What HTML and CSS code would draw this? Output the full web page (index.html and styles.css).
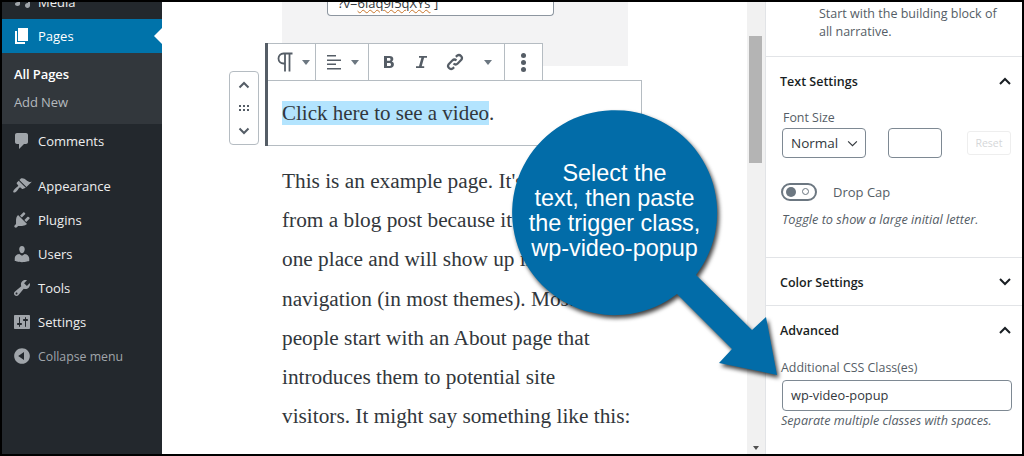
FILE: index.html
```html
<!DOCTYPE html>
<html lang="en">
<head>
<meta charset="utf-8">
<title>Edit Page</title>
<link rel="stylesheet" href="styles.css">
</head>
<body>
<div class="frame">
  <nav class="adminmenu">
    <ul class="menu">
      <li class="item media"><svg class="ico" viewBox="0 0 20 20"><path d="M2 3h9v4H8v5c0 1-1 2-2.500 2S3 13 3 12s1-2 3-2V5H2zM18 3v10.500c0 1.400-1.100 2.500-2.500 2.500S13 14.900 13 13.500s1.100-2.500 2.500-2.500h.5V6h-3V3z"/></svg><span>Media</span></li>
      <li class="item current"><svg class="ico" viewBox="0 0 20 20"><path d="M6 15V2h10v13H6zm-1 1h8v2H3V5h2v11z"/></svg><span>Pages</span></li>
      <li class="sub">
        <a class="sub-on">All Pages</a>
        <a>Add New</a>
      </li>
      <li class="item"><svg class="ico" viewBox="0 0 20 20"><path d="M5 2h9c1.100 0 2 .9 2 2v7c0 1.100-.9 2-2 2h-2l-5 5v-5H5c-1.100 0-2-.9-2-2V4c0-1.100.9-2 2-2z"/></svg><span>Comments</span></li>
      <li class="item gap"><svg class="ico" viewBox="0 0 20 20"><path d="M14.480 11.060L7.410 3.990l1.500-1.500c.5-.56 2.300-.47 3.510.32 1.210.8 1.430 1.280 2.910 2.100 1.180.64 2.450 1.260 4.450.85zm-.71.71L6.700 4.700 4.930 6.470c-.39.39-.39 1.020 0 1.410l1.060 1.060c.39.39.39 1.030 0 1.420-.6.6-1.430 1.110-2.210 1.690-.35.26-.7.53-1.010.84-1.340 1.340-2 2.740-1.330 3.400.65.66 2.050.01 3.390-1.330.31-.31.58-.66.84-1.010.58-.78 1.090-1.610 1.690-2.210.39-.39 1.030-.39 1.420 0l1.060 1.060c.39.39 1.020.39 1.410 0z"/></svg><span>Appearance</span></li>
      <li class="item"><svg class="ico" viewBox="0 0 20 20"><path d="M13.110 4.360L9.870 7.600 8 5.730l3.240-3.240c.35-.34 1.050-.2 1.560.32.52.51.66 1.210.31 1.550zm-8 1.770l.91-1.120 9.010 9.010-1.190.84c-.71.71-2.630 1.160-3.820 1.160H6.140L4.900 17.260c-.59.59-1.540.59-2.120 0-.59-.58-.59-1.530 0-2.120l1.240-1.240v-3.880c0-1.130.4-3.190 1.090-3.890zm7.260 3.970l3.240-3.240c.34-.35 1.040-.21 1.550.31.52.51.66 1.210.31 1.550l-3.240 3.250z"/></svg><span>Plugins</span></li>
      <li class="item"><svg class="ico" viewBox="0 0 20 20"><path d="M10 9.250c-2.270 0-2.730-3.440-2.730-3.440C7 4.020 7.820 2 9.970 2c2.160 0 2.980 2.020 2.710 3.810 0 0-.41 3.440-2.680 3.440zm0 2.570L12.720 10c2.390 0 4.520 2.330 4.520 4.530v2.490s-3.650 1.130-7.240 1.130c-3.650 0-7.240-1.130-7.240-1.130v-2.490c0-2.250 1.940-4.480 4.470-4.480z"/></svg><span>Users</span></li>
      <li class="item"><svg class="ico" viewBox="0 0 20 20"><path d="M16.680 9.770c-1.340 1.340-3.300 1.670-4.950.99l-5.410 6.520c-.99.99-2.590.99-3.580 0s-.99-2.590 0-3.570l6.520-5.420c-.68-1.650-.35-3.610.99-4.950 1.280-1.280 3.120-1.620 4.720-1.060l-2.890 2.890 2.820 2.820 2.860-2.870c.53 1.580.18 3.390-1.080 4.650zM3.810 16.210c.4.39 1.040.39 1.430 0 .4-.4.4-1.040 0-1.430-.39-.4-1.030-.4-1.430 0-.39.39-.39 1.030 0 1.430z"/></svg><span>Tools</span></li>
      <li class="item"><svg class="ico" viewBox="0 0 20 20"><path d="M18 16V4c0-.55-.45-1-1-1H3c-.55 0-1 .45-1 1v12c0 .55.45 1 1 1h14c.55 0 1-.45 1-1zM8 11h1c.55 0 1 .45 1 1s-.45 1-1 1H8v1.500c0 .28-.22.5-.5.5s-.5-.22-.5-.5V13H6c-.55 0-1-.45-1-1s.45-1 1-1h1V5.500c0-.28.22-.5.5-.5s.5.22.5.5V11zm5-2h-1c-.55 0-1-.45-1-1s.45-1 1-1h1V5.500c0-.28.22-.5.5-.5s.5.22.5.5V7h1c.55 0 1 .45 1 1s-.45 1-1 1h-1v5.500c0 .28-.22.5-.5.5s-.5-.22-.5-.5V9z"/></svg><span>Settings</span></li>
      <li class="item collapse"><svg class="ico" viewBox="0 0 20 20"><path d="M10 2.160c4.330 0 7.840 3.510 7.840 7.840s-3.510 7.840-7.840 7.840S2.160 14.330 2.160 10 5.710 2.160 10 2.160zm2 11.720V6.120L6.180 9.970z"/></svg><span>Collapse menu</span></li>
    </ul>
  </nav>

  <main class="editor">
    <div class="embed">
      <div class="embed-input">?v=<span class="squiggle">6laq9l5qXYs</span> ]</div>
    </div>

    <div class="block">
      <div class="toolbar">
        <div class="tgroup t-para">
          <svg class="tb-ico para" viewBox="0 0 16 20"><path fill="none" stroke="currentColor" stroke-width="1.800" d="M15.500 1.500H6.500a5 5 0 0 0 0 10H8M8 1.500V19.500M12.500 1.500V19.500"/></svg>
          <i class="caret"></i>
        </div>
        <div class="tgroup t-align">
          <svg class="tb-ico small" viewBox="0 0 14 16"><path d="M0 1h9v1.500H0zM0 5.500h14V7H0zM0 9.500h9V11H0zM0 14h14v1.500H0z"/></svg>
          <i class="caret"></i>
        </div>
        <div class="tgroup t-format">
          <svg class="tb-ico small" viewBox="0 0 16 16"><path d="M3 2h5.500c2.500 0 3.800 1.200 3.800 3.100 0 1.200-.6 2-1.500 2.500 1.300.4 2.100 1.400 2.100 2.900 0 2.300-1.600 3.500-4.100 3.500H3zm3 4.800h2c1 0 1.500-.5 1.500-1.400S9 4.100 8 4.100H6zm0 5.100h2.300c1.100 0 1.700-.5 1.700-1.500s-.6-1.500-1.700-1.500H6z"/></svg>
          <svg class="tb-ico small" viewBox="0 0 16 16"><path d="M6 2h8v1.800h-2.900L8.700 12.200h2.500V14H3v-1.800h3L8.400 3.800H6z"/></svg>
          <svg class="tb-ico link" viewBox="0 0 20 20"><path fill="none" stroke="currentColor" stroke-width="2.200" d="M8.500 11.500a3 3 0 0 0 4.200 0l3.600-3.600a3 3 0 0 0-4.200-4.200l-1.200 1.200M11.500 8.500a3 3 0 0 0-4.200 0l-3.600 3.600a3 3 0 0 0 4.200 4.200l1.200-1.200"/></svg>
          <i class="caret"></i>
        </div>
        <div class="tgroup t-more">
          <i class="dots"></i>
        </div>
      </div>
      <div class="para-box">
        <span class="selected">Click here to see a video</span>.
      </div>
      <div class="mover">
        <svg class="mv" viewBox="0 0 12 8"><path fill="none" stroke="currentColor" stroke-width="2" d="M1.500 6.500L6 2l4.500 4.500"/></svg>
        <span class="grip"></span>
        <svg class="mv" viewBox="0 0 12 8"><path fill="none" stroke="currentColor" stroke-width="2" d="M1.500 1.500L6 6l4.500-4.500"/></svg>
      </div>
    </div>

    <p class="body-copy">This is an example page. It's different from a blog post because it will stay in one place and will show up in your site navigation (in most themes). Most people start with an About page that introduces them to potential site<br>visitors. It might say something like this:</p>
  </main>

  <div class="scrollbar"><div class="thumb"></div><i class="scroll-down"></i></div>

  <aside class="inspector">
    <div class="blockcard">Start with the building block of all narrative.</div>

    <section class="panel text-panel">
      <header class="panel-head"><h2>Text Settings</h2><svg class="chev" viewBox="0 0 12 8"><path fill="none" stroke="currentColor" stroke-width="2" d="M1 7l5-5 5 5"/></svg></header>
      <div class="label fs-label">Font Size</div>
      <div class="fs-row">
        <div class="select">Normal<svg class="sel-chev" viewBox="0 0 12 8"><path fill="none" stroke="currentColor" stroke-width="1.300" d="M1 1.500l5 5 5-5"/></svg></div>
        <div class="num"></div>
        <div class="reset">Reset</div>
      </div>
      <div class="toggle-row">
        <span class="toggle"><i class="knob"></i><i class="ring"></i></span>
        <span class="toggle-label">Drop Cap</span>
      </div>
      <div class="help">Toggle to show a large initial letter.</div>
    </section>

    <section class="panel closed">
      <header class="panel-head"><h2>Color Settings</h2><svg class="chev" viewBox="0 0 12 8"><path fill="none" stroke="currentColor" stroke-width="2" d="M1 1l5 5 5-5"/></svg></header>
    </section>

    <section class="panel adv-panel">
      <header class="panel-head"><h2>Advanced</h2><svg class="chev" viewBox="0 0 12 8"><path fill="none" stroke="currentColor" stroke-width="2" d="M1 7l5-5 5 5"/></svg></header>
      <div class="label css-label">Additional CSS Class(es)</div>
      <div class="css-input">wp-video-popup</div>
      <div class="help css-help">Separate multiple classes with spaces.</div>
    </section>
  </aside>

  <svg class="callout-shape" viewBox="0 0 1024 456" aria-hidden="true">
    <path d="M696 275L752 330L766 317L777 375L719 363L732 349L677 294A102.500 102.500 0 1 1 696 275Z"/>
  </svg>
  <div class="callout-text">Select the<br>text, then paste<br>the trigger class,<br>wp-video-popup</div>
</div>
</body>
</html>
```
FILE: styles.css
```css
* { box-sizing: border-box; }
html, body { margin: 0; padding: 0; }
body { width: 1024px; height: 456px; overflow: hidden; background: #000; font-family: "Open Sans", "Liberation Sans", sans-serif; }
.frame { position: relative; display: flex; width: 1024px; height: 456px; border: 2px solid #000; overflow: hidden; background: #fff; }

/* Admin menu */
.adminmenu { flex: 0 0 160px; background: #23282d; overflow: hidden; color: #eee; font-size: 13px; }
.menu { list-style: none; margin: -17px 0 0; padding: 0; }
.item { display: flex; align-items: center; height: 34px; padding-left: 10px; gap: 6px; position: relative; }
.ico { width: 20px; height: 20px; fill: #a0a5aa; flex: none; }
.current { background: #0073aa; color: #fff; }
.current .ico { fill: #fff; }
.current::after { content: ""; position: absolute; right: 0; top: 9px; border: 8px solid transparent; border-right-color: #fff; border-left-width: 0; }
.sub { background: #32373c; height: 71px; padding-top: 7px; font-size: 13px; display: flex; flex-direction: column; }
.sub a { display: block; height: 28px; line-height: 28px; padding-left: 12px; color: #b4b9be; letter-spacing: -.1px; }
.sub .sub-on { color: #fff; font-weight: 600; }
.gap { margin-top: 11px; }
.collapse { color: #a0a5aa; font-size: 12.300px; }

/* Editor column */
.editor { flex: 0 0 585px; padding-left: 120px; background: #fff; overflow: hidden; }
.embed { width: 346px; height: 64px; background: #f3f3f4; padding-left: 45px; }
.embed-input { width: 227px; height: 14px; margin-top: 0; background: #fff; border: 1px solid #8d96a0; border-top: 0; border-radius: 0 0 4px 4px; font-size: 13px; line-height: 2px; padding-left: 10px; color: #32373c; overflow: hidden; }
.squiggle { text-decoration: underline wavy #c8752b 1px; }
.block { position: relative; margin: -23px 0 0 -17px; width: 377px; border-left: 3px solid #555d66; }
.toolbar { display: flex; position: relative; width: 275px; height: 38px; background: #fff; border: 1px solid #b5bcc2; border-left: 0; color: #555d66; }
.tgroup { display: flex; align-items: center; border-right: 1px solid #b5bcc2; height: 100%; }
.tgroup:last-child { border-right: 0; }
.t-para { width: 48px; padding-left: 9px; gap: 9px; }
.t-align { width: 53px; padding-left: 11px; gap: 10px; }
.t-format { width: 136px; padding-left: 12px; }
.t-more { flex: 1; justify-content: center; }
.tb-ico { fill: currentColor; flex: none; }
.tb-ico.para { width: 16px; height: 20px; }
.tb-ico.small { width: 16px; height: 16px; }
.t-align .tb-ico.small { width: 14px; }
.t-format .tb-ico.small { margin-right: 16px; }
.t-format .tb-ico.link { width: 20px; height: 20px; margin-right: 19px; }
.caret { width: 0; height: 0; border: 4px solid transparent; border-top: 5px solid #6c7781; border-bottom: 0; flex: none; }
.dots { width: 5px; height: 5px; border-radius: 50%; background: #555d66; box-shadow: 0 -7px 0 #555d66, 0 7px 0 #555d66; }
.para-box { height: 66px; width: 374px; margin-top: -1px; border: 1px solid #b5bcc2; border-left: 0; padding: 18px 0 0 14px; font-family: "Liberation Serif", serif; font-size: 21px; line-height: 28px; color: #32373c; background: #fff; }
.selected { background: #b3e4fe; }
.mover { position: absolute; left: -39px; top: 28px; width: 30px; height: 74px; display: flex; flex-direction: column; align-items: center; justify-content: space-between; padding: 9px 0; background: #fff; border: 1px solid #b5bcc2; border-radius: 4px; color: #555d66; }
.mv { width: 12px; height: 8px; }
.grip { width: 12px; height: 6px; background-image: radial-gradient(#555d66 1px, transparent 1px); background-size: 4px 4px; background-position: 0 -1px; }
.body-copy { width: 352px; margin: 16px 0 0; font-family: "Liberation Serif", serif; font-size: 21.300px; line-height: 39.200px; color: #32373c; }

/* Scrollbar */
.scrollbar { position: relative; flex: 0 0 18px; background: #f1f1f1; }
.thumb { width: 13px; height: 127px; margin: 34px 0 0 2px; background: #b4b4b4; }
.scroll-down { position: absolute; left: 6px; bottom: 4px; width: 0; height: 0; border: 3px solid transparent; border-top: 4px solid #505050; border-bottom: 0; }

/* Inspector */
.inspector { flex: 1; border-left: 1px solid #e2e4e7; color: #191e23; font-size: 13px; background: #fff; min-width: 0; }
.blockcard { height: 55px; padding: 3px 10px 0 53px; line-height: 18px; color: #555d66; font-size: 12.500px; border-bottom: 1px solid #e2e4e7; }
.panel { border-bottom: 1px solid #e2e4e7; padding: 0 10px 0 14px; }
.panel-head { display: flex; justify-content: space-between; align-items: center; height: 50px; padding-bottom: 2px; }
.panel-head h2 { margin: 0; font-size: 12.500px; font-weight: 600; color: #191e23; }
.chev { width: 12px; height: 8px; color: #191e23; margin-right: 1px; }
.text-panel { height: 201px; }
.label { font-size: 12.400px; color: #555d66; }
.fs-label { margin: 4px 0 0 3px; line-height: 14px; height: 17px; }
.fs-row { display: flex; align-items: center; margin: 0; height: 30px; }
.select { display: flex; align-items: center; justify-content: space-between; width: 84px; height: 30px; margin-left: 2px; padding: 0 7px 0 8px; border: 1px solid #7e8993; border-radius: 4px; font-size: 13.500px; color: #32373c; }
.sel-chev { width: 11px; height: 7px; color: #32373c; }
.num { width: 54px; height: 30px; margin-left: 22px; border: 1px solid #7e8993; border-radius: 4px; }
.reset { width: 44px; height: 24px; margin-left: 25px; border: 1px solid #eeeeee; border-radius: 3px; font-size: 10.500px; line-height: 22px; text-align: center; color: #d5d7d9; }
.toggle-row { display: flex; align-items: center; margin: 25px 0 0 1px; height: 18px; }
.toggle { position: relative; width: 36px; height: 18px; border: 2px solid #6c7781; border-radius: 9px; background: #fff; }
.knob { position: absolute; left: 3px; top: 2px; width: 10px; height: 10px; border-radius: 50%; background: #6c7781; }
.ring { position: absolute; right: 6px; top: 3px; width: 7px; height: 7px; border-radius: 50%; border: 1.500px solid #6c7781; }
.toggle-label { margin-left: 16px; color: #555d66; font-size: 13px; }
.help { font-size: 12.750px; font-style: italic; color: #555d66; }
.text-panel .help { margin: 9px 0 0 2px; }
.closed { height: 48px; }
.closed .panel-head { height: 48px; padding-bottom: 0; }
.adv-panel { border-bottom: 0; }
.adv-panel .panel-head { height: 48px; padding-bottom: 0; }
.css-label { margin: 5px 0 0 1px; height: 18px; line-height: 18px; }
.css-input { width: 230px; height: 31px; margin: 3px 0 0 2px; padding-left: 8px; border: 1px solid #7e8993; border-radius: 4px; line-height: 29px; font-size: 12.800px; color: #32373c; }
.css-help { margin: 1px 0 0 1px; font-size: 12.600px; }

/* Callout overlay */
.callout-shape { position: absolute; left: -2px; top: -2px; width: 1024px; height: 456px; fill: #026ca8; filter: drop-shadow(2px 3px 2px rgba(0,0,0,.75)); pointer-events: none; }
.callout-text { position: absolute; left: 502px; top: 159px; width: 221px; text-align: center; font-family: "Liberation Sans", Arial, sans-serif; font-size: 23.400px; line-height: 25px; color: #fff; }
```
